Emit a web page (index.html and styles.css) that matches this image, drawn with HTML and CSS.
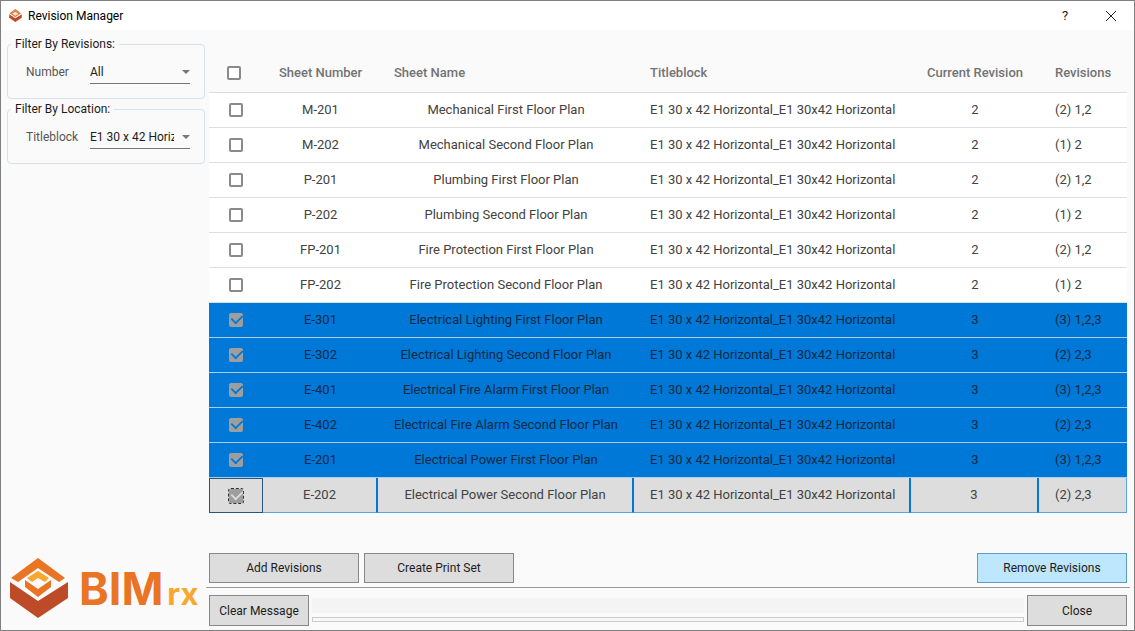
FILE: index.html
```html
<!DOCTYPE html>
<html lang="en">
<head>
<meta charset="utf-8">
<title>Revision Manager</title>
<link rel="stylesheet" href="styles.css">
</head>
<body>
<div class="window">
  <header class="titlebar">
    <svg class="app-icon" viewBox="0 0 58 60" aria-hidden="true">
      <path fill="#d9824a" d="M28 0L55 20L28 38L1 20Z"/>
      <path fill="#f7e3d4" d="M28 13L42 22L28 31L14 22Z"/>
      <path fill="#bd4b27" d="M0 24L28 43L58 24V40L28 60L0 40Z"/>
    </svg>
    <h1 class="title">Revision Manager</h1>
    <button class="caption-button" type="button" aria-label="Help">?</button>
    <button class="caption-button" type="button" aria-label="Close window">
      <svg class="close-icon" viewBox="0 0 10 10" aria-hidden="true"><path d="M0 0L10 10M10 0L0 10"/></svg>
    </button>
  </header>
  <div class="body">
    <aside class="sidebar">
      <fieldset class="filter">
        <legend>Filter By Revisions:</legend>
        <div class="field">
          <label for="number">Number</label>
          <div class="picker"><select id="number"><option>All</option></select></div>
        </div>
      </fieldset>
      <fieldset class="filter">
        <legend>Filter By Location:</legend>
        <div class="field">
          <label for="titleblock">Titleblock</label>
          <div class="picker"><select id="titleblock"><option>E1 30 x 42 Horizontal_E1 30x42 Horizontal</option></select></div>
        </div>
      </fieldset>
      <div class="logo">
        <svg class="logo-mark" viewBox="0 0 58 60" aria-hidden="true">
          <path fill="#e87424" d="M28 0L55 20L49 24L28 10L8 24L1 20Z"/>
          <path fill="#f9a72f" d="M28 13L39 20L35 24L28 20L22 24L17 20Z"/>
          <path fill="#e87424" d="M15 22L28 31L41 22V29L28 39L15 29Z"/>
          <path fill="#bd4b27" d="M0 24L28 43L58 24V40L28 60L0 40Z"/>
        </svg>
        <div class="wordmark"><span class="logo-name">BIM</span><span class="logo-suffix">rx</span></div>
      </div>
    </aside>
    <main class="content">
      <table class="sheets">
        <colgroup><col class="col-check"><col class="col-number"><col class="col-name"><col class="col-block"><col class="col-current"><col class="col-revs"></colgroup>
        <thead>
          <tr><th><input type="checkbox" aria-label="Select all"></th><th>Sheet Number</th><th class="start">Sheet Name</th><th class="start">Titleblock</th><th>Current Revision</th><th class="start">Revisions</th></tr>
        </thead>
        <tbody>
          <tr><td><input type="checkbox" aria-label="M-201"></td><td>M-201</td><td>Mechanical First Floor Plan</td><td class="start">E1 30 x 42 Horizontal_E1 30x42 Horizontal</td><td>2</td><td class="start">(2) 1,2</td></tr>
          <tr><td><input type="checkbox" aria-label="M-202"></td><td>M-202</td><td>Mechanical Second Floor Plan</td><td class="start">E1 30 x 42 Horizontal_E1 30x42 Horizontal</td><td>2</td><td class="start">(1) 2</td></tr>
          <tr><td><input type="checkbox" aria-label="P-201"></td><td>P-201</td><td>Plumbing First Floor Plan</td><td class="start">E1 30 x 42 Horizontal_E1 30x42 Horizontal</td><td>2</td><td class="start">(2) 1,2</td></tr>
          <tr><td><input type="checkbox" aria-label="P-202"></td><td>P-202</td><td>Plumbing Second Floor Plan</td><td class="start">E1 30 x 42 Horizontal_E1 30x42 Horizontal</td><td>2</td><td class="start">(1) 2</td></tr>
          <tr><td><input type="checkbox" aria-label="FP-201"></td><td>FP-201</td><td>Fire Protection First Floor Plan</td><td class="start">E1 30 x 42 Horizontal_E1 30x42 Horizontal</td><td>2</td><td class="start">(2) 1,2</td></tr>
          <tr><td><input type="checkbox" aria-label="FP-202"></td><td>FP-202</td><td>Fire Protection Second Floor Plan</td><td class="start">E1 30 x 42 Horizontal_E1 30x42 Horizontal</td><td>2</td><td class="start">(1) 2</td></tr>
          <tr class="selected"><td><input type="checkbox" checked aria-label="E-301"></td><td>E-301</td><td>Electrical Lighting First Floor Plan</td><td class="start">E1 30 x 42 Horizontal_E1 30x42 Horizontal</td><td>3</td><td class="start">(3) 1,2,3</td></tr>
          <tr class="selected"><td><input type="checkbox" checked aria-label="E-302"></td><td>E-302</td><td>Electrical Lighting Second Floor Plan</td><td class="start">E1 30 x 42 Horizontal_E1 30x42 Horizontal</td><td>3</td><td class="start">(2) 2,3</td></tr>
          <tr class="selected"><td><input type="checkbox" checked aria-label="E-401"></td><td>E-401</td><td>Electrical Fire Alarm First Floor Plan</td><td class="start">E1 30 x 42 Horizontal_E1 30x42 Horizontal</td><td>3</td><td class="start">(3) 1,2,3</td></tr>
          <tr class="selected"><td><input type="checkbox" checked aria-label="E-402"></td><td>E-402</td><td>Electrical Fire Alarm Second Floor Plan</td><td class="start">E1 30 x 42 Horizontal_E1 30x42 Horizontal</td><td>3</td><td class="start">(2) 2,3</td></tr>
          <tr class="selected"><td><input type="checkbox" checked aria-label="E-201"></td><td>E-201</td><td>Electrical Power First Floor Plan</td><td class="start">E1 30 x 42 Horizontal_E1 30x42 Horizontal</td><td>3</td><td class="start">(3) 1,2,3</td></tr>
          <tr class="current"><td><input type="checkbox" checked aria-label="E-202"></td><td>E-202</td><td>Electrical Power Second Floor Plan</td><td class="start">E1 30 x 42 Horizontal_E1 30x42 Horizontal</td><td>3</td><td class="start">(2) 2,3</td></tr>
        </tbody>
      </table>
      <div class="actions">
        <button class="button" type="button">Add Revisions</button>
        <button class="button" type="button">Create Print Set</button>
        <button class="button primary" type="button">Remove Revisions</button>
      </div>
      <footer class="status">
        <button class="button clear" type="button">Clear Message</button>
        <div class="message"><div class="message-text"></div><div class="progress"></div></div>
        <button class="button close" type="button">Close</button>
      </footer>
    </main>
  </div>
</div>
</body>
</html>
```
FILE: styles.css
```css
* { box-sizing: border-box; }
body { margin: 0; font: 12px/16px Roboto, "Liberation Sans", sans-serif; color: #1c1c1c; }
button, select, input { font: inherit; color: inherit; margin: 0; }
.window { display: flex; flex-direction: column; min-height: 100vh; background: #fafafa; border: 1px solid #808080; }

.titlebar { display: flex; align-items: center; height: 29px; padding-left: 8px; background: #fff; }
.app-icon { width: 13px; height: 13px; }
.title { flex: 1; margin: 0 0 0 6px; font-size: 12px; font-weight: 400; color: #000; }
.caption-button { display: grid; place-items: center; width: 46px; height: 28px; padding: 0; border: 0; background: none; font-size: 13px; }
.close-icon { width: 10px; height: 10px; overflow: visible; fill: none; stroke: #222; stroke-width: 1; }

.body { display: flex; flex: 1; }
.sidebar { display: flex; flex-direction: column; flex: none; width: 204px; padding: 6px 0 12px 6px; }
.filter { height: 63px; margin: 0 0 2px; padding: 0 14px 0 18px; border: 1px solid #d8e1e8; border-radius: 4px; min-width: 0; }
.filter legend { margin-left: -15px; padding: 0 4px; }
.field { display: flex; align-items: center; justify-content: space-between; padding-top: 8px; }
.field label { color: #555; }
.picker { position: relative; width: 100px; border-bottom: 1px solid #777; }
.picker::after { content: ""; position: absolute; right: 0; top: 10px; border: 4px solid transparent; border-top-color: #777; border-bottom: 0; pointer-events: none; }
.picker select { display: block; width: 84px; height: 23px; padding: 0; border: 0; background: none; appearance: none; overflow: hidden; text-overflow: clip; }

.logo { display: flex; align-items: flex-end; margin-top: auto; padding-left: 3px; }
.logo-mark { flex: none; width: 58px; height: 60px; margin-right: 11px; }
.wordmark { display: flex; align-items: baseline; gap: 4px; white-space: nowrap; font-family: Inter, Roboto, sans-serif; font-weight: 700; line-height: 48px; }
.logo-name { font-size: 45px; color: #e87424; }
.logo-suffix { font-size: 31px; color: #f9a72f; }

.content { display: flex; flex-direction: column; flex: 1; min-width: 0; padding-bottom: 4px; }
.sheets { width: calc(100% - 11px); margin: 23px 7px 0 4px; border-spacing: 0; table-layout: fixed; font-size: 13px; color: #424242; }
.col-check { width: 54px; }
.col-number { width: 115px; }
.col-block { width: 277px; }
.col-current { width: 128px; }
.col-revs { width: 88px; }
.sheets th, .sheets td { height: 35px; padding: 0; border-bottom: 1px solid #dedede; text-align: center; white-space: nowrap; }
.sheets th { height: 40px; font-weight: 500; color: #737373; }
.sheets th:first-child { padding-right: 4px; }
.sheets .start { text-align: left; padding-left: 16px; }
.sheets td { background: #fff; }
.sheets input { display: block; width: 14px; height: 14px; margin: 0 auto; appearance: none; border: 2px solid #8a8a8a; border-radius: 2px; background: #fff; }
.sheets input:checked { border: 0; background: #9e9e9e; padding: 3px 2px; }
.sheets input:checked::before { content: ""; display: block; width: 10px; height: 6px; border: solid #0078d7; border-width: 0 0 2px 2px; transform: translateY(-1px) rotate(-45deg) scale(.9); }
.sheets input:checked { padding-top: 2px; }
.sheets .selected td { background: #0078d7; color: #102a43; border-bottom-color: #a9cdec; }
.sheets .current td { background: #ddd; border: 1px solid #5ba3df; border-top: 0; border-left: 0; border-right: 2px solid #0078d7; }
.sheets .current td:last-child { border-right: 1px solid #5ba3df; }
.sheets .current td:first-child { border: 1px solid #285578; }
.sheets .current input { outline: 1px dashed #333; }
.sheets .current input::before { border-color: #ddd; }

.actions { display: flex; gap: 5px; margin-top: auto; padding: 0 7px 4px 4px; }
.button { width: 150px; height: 30px; padding: 0; border: 1px solid #888; background: #ddd; }
.primary { margin-left: auto; background: #bee6fd; border-color: #5b9bc8; }
.status { display: flex; gap: 3px; margin: 0 4px 0 1px; padding: 7px 3px 0 3px; border-top: 1px solid #999; }
.status .button { height: 31px; }
.status .clear, .status .close { flex: none; width: 100px; }
.message { flex: 1; padding-top: 3px; }
.message-text { height: 15px; background: #f4f4f4; }
.progress { height: 5px; margin-top: 4px; border: 1px solid #ccc; background: #f7f7f7; }
```
